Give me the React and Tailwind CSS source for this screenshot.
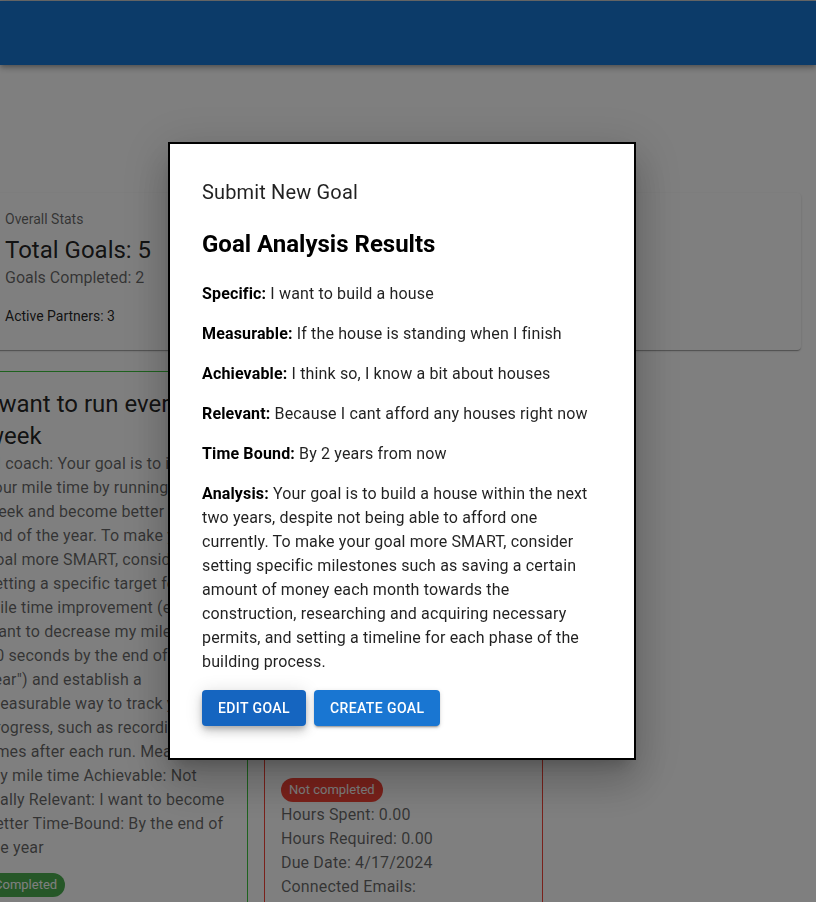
import React from "react";

const leftLines = [
  "your mile time by running every",
  "week and become better by the",
  "end of the year. To make your",
  "goal more SMART, consider",
  "setting a specific target for",
  "mile time improvement (e.g., \"I",
  "want to decrease my mile time by",
  "30 seconds by the end of the",
  "year\") and establish a",
  "measurable way to track your",
  "progress, such as recording your",
  "times after each run. Measurable:",
  "my mile time Achievable: Not",
  "really Relevant: I want to become",
  "better Time-Bound: By the end of",
  "the year",
];

const redLines = [
  "AI coach: Your goal is to read",
  "more books this year. To make",
  "your goal more SMART, consider",
  "setting a specific number of",
  "books to read and a timeline",
  "for each one. Measurable: The",
  "number of books I finish",
  "Achievable: Yes Relevant: I",
  "want to learn more Time-",
  "Bound: By the end of the year",
  "and track my progress each",
  "month with a short summary",
];

function Card({ border, title, children, chip, chipBg, chipGap, footer }) {
  return (
    <div className={`w-[279px] shrink-0 rounded-[4px] border bg-white px-4 pb-6 pt-4 ${border}`}>
      <div className="text-[24px] leading-[32px] text-black/[0.87]">{title}</div>
      <div className="text-[16px] leading-[24px] tracking-[0.15px] text-black/60 whitespace-nowrap">
        {children}
      </div>
      <div className={chipGap}>
        <span className={`inline-flex h-6 items-center rounded-full px-2 text-[13px] text-white ${chipBg}`}>
          {chip}
        </span>
      </div>
      <div className="mt-px text-[16px] leading-[24px] tracking-[0.15px] text-black/60 whitespace-nowrap">
        {footer}
      </div>
    </div>
  );
}

export default function App() {
  return (
    <div className="relative h-[902px] w-[816px] overflow-hidden bg-white font-['Roboto','Liberation_Sans',sans-serif]">
      <div className="h-px bg-[#d6d6d6]" />
      <header className="relative z-10 h-16 bg-[#1976d2] shadow-[0px_2px_4px_-1px_rgba(0,0,0,0.2),0px_4px_5px_0px_rgba(0,0,0,0.14),0px_1px_10px_0px_rgba(0,0,0,0.12)]" />

      <main className="ml-[-31px] pt-[128px]">
        <div className="ml-5 w-[812px] rounded-[4px] bg-white px-4 pb-6 pt-4 shadow-[0px_2px_1px_-1px_rgba(0,0,0,0.2),0px_1px_1px_0px_rgba(0,0,0,0.14),0px_1px_3px_0px_rgba(0,0,0,0.12)]">
          <div className="mb-[5px] text-[14px] leading-[20px] text-black/60">Overall Stats</div>
          <div className="text-[24px] leading-[32px] text-black/[0.87]">Total Goals: 5</div>
          <div className="text-[16px] leading-[24px] text-black/60">Goals Completed: 2</div>
          <div className="mt-4 text-[14px] leading-[20px] text-black/[0.87]">Active Partners: 3</div>
        </div>

        <div className="mt-[21px] flex items-start gap-4">
          <Card
            border="border-[#3cc43c]"
            title={<>I want to run every<br />week</>}
            chip="Completed"
            chipBg="bg-[#4caf50]"
            chipGap="mt-3"
            footer={
              <>
                <div>Hours Spent: 12.00</div>
                <div>Hours Required: 10.00</div>
                <div>Due Date: 12/31/2024</div>
                <div>Connected Emails:</div>
              </>
            }
          >
            <div>
              <span className="text-[#26a69a]">AI</span> coach: Your goal is to improve
            </div>
            {leftLines.map((l, i) => (
              <div key={i}>{l}</div>
            ))}
          </Card>

          <Card
            border="border-[#f44336]"
            title={<>Read 20 books this<br />year</>}
            chip="Not completed"
            chipBg="bg-[#f44336]"
            chipGap="mt-[37px]"
            footer={
              <>
                <div>Hours Spent: 0.00</div>
                <div>Hours Required: 0.00</div>
                <div>Due Date: 4/17/2024</div>
                <div>Connected Emails:</div>
              </>
            }
          >
            {redLines.map((l, i) => (
              <div key={i}>{l}</div>
            ))}
          </Card>
        </div>
      </main>

      <div className="fixed inset-0 z-20 bg-black/50" />

      <div className="fixed left-[168px] top-[142px] z-30 w-[468px] border-2 border-black bg-white p-8 text-black/[0.87] shadow-[0px_11px_15px_-7px_rgba(0,0,0,0.2),0px_24px_38px_3px_rgba(0,0,0,0.14),0px_9px_46px_8px_rgba(0,0,0,0.12)]">
        <div className="text-[20px] leading-[32px] tracking-[0.15px]">Submit New Goal</div>
        <h2 className="mb-[22px] mt-5 text-[24px] font-bold leading-[32px] text-black">Goal Analysis Results</h2>
        <div className="flex flex-col gap-4 text-[16px] leading-[24px] tracking-[0.15px]">
          <p><strong className="text-black">Specific:</strong> I want to build a house</p>
          <p><strong className="text-black">Measurable:</strong> If the house is standing when I finish</p>
          <p><strong className="text-black">Achievable:</strong> I think so, I know a bit about houses</p>
          <p><strong className="text-black">Relevant:</strong> Because I cant afford any houses right now</p>
          <p><strong className="text-black">Time Bound:</strong> By 2 years from now</p>
          <p>
            <strong className="text-black">Analysis:</strong> Your goal is to build a house within the next two years, despite not being able to afford one currently. To make your goal more SMART, consider setting specific milestones such as saving a certain amount of money each month towards the construction, researching and acquiring necessary permits, and setting a timeline for each phase of the building process.
          </p>
        </div>
        <div className="mt-4 flex gap-2">
          <button className="h-9 rounded-[4px] bg-[#1565c0] px-4 text-[14px] font-medium uppercase tracking-[0.4px] text-white shadow-[0px_3px_5px_-1px_rgba(0,0,0,0.2),0px_6px_10px_0px_rgba(0,0,0,0.14),0px_1px_18px_0px_rgba(0,0,0,0.12)]">
            Edit Goal
          </button>
          <button className="h-9 rounded-[4px] bg-[#1976d2] px-4 text-[14px] font-medium uppercase tracking-[0.4px] text-white shadow-[0px_3px_1px_-2px_rgba(0,0,0,0.2),0px_2px_2px_0px_rgba(0,0,0,0.14),0px_1px_5px_0px_rgba(0,0,0,0.12)]">
            Create Goal
          </button>
        </div>
      </div>
    </div>
  );
}
